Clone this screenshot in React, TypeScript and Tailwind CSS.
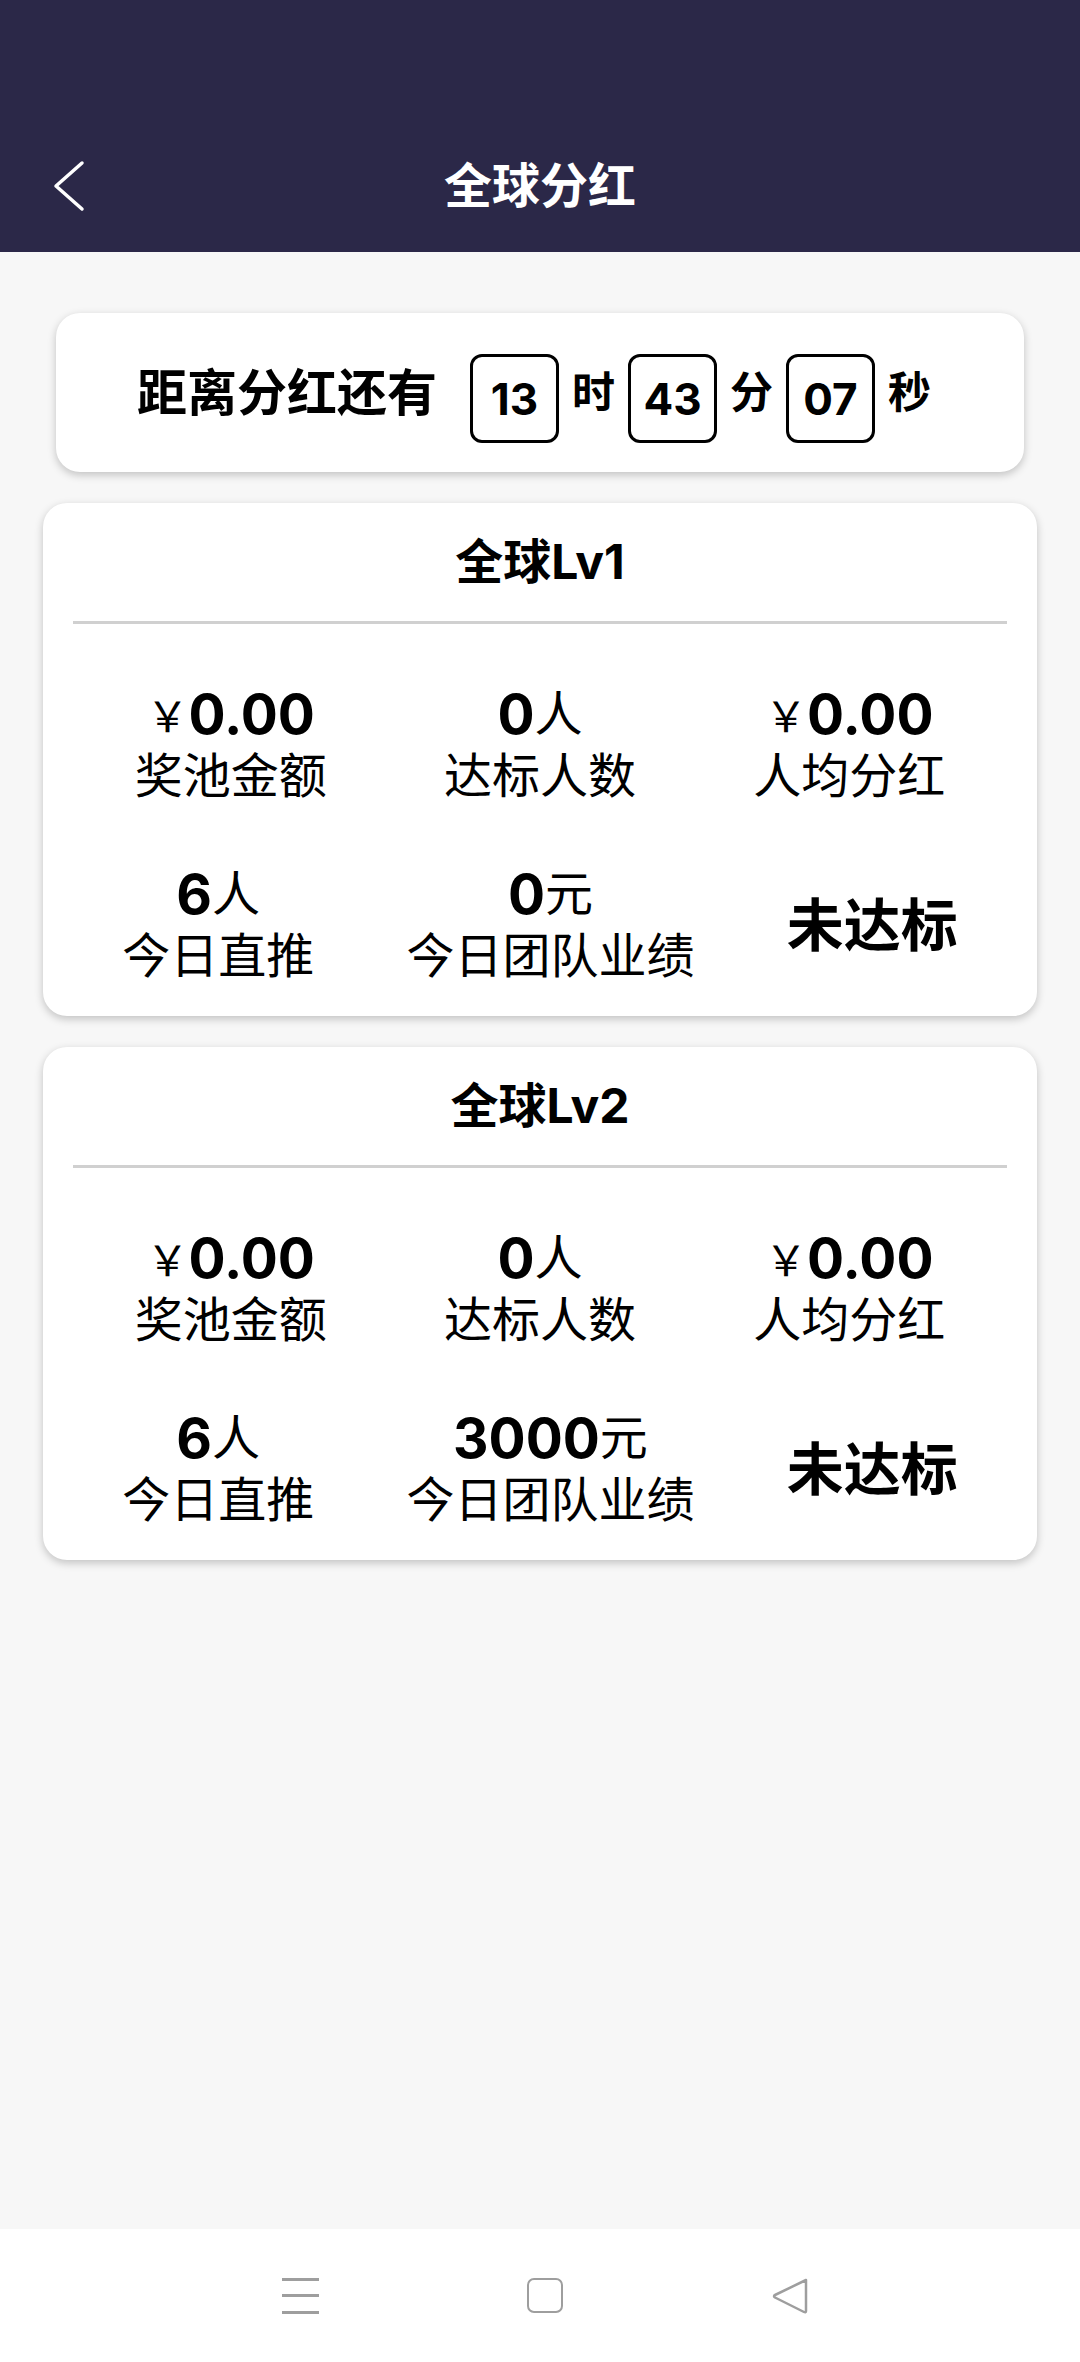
import React from "react";

type Stat = { prefix?: string; value: string; unit?: string; label: string };

interface TierCardProps {
  title: string;
  topStats: Stat[];
  bottomStats: Stat[];
  status: string;
}

function StatItem({ prefix, value, unit, label }: Stat) {
  return (
    <div className="flex flex-col items-center">
      <div className="flex h-[62px] items-center leading-none">
        {prefix && (
          <span className="text-[42px] font-normal [font-family:'Noto_Sans_CJK_SC',sans-serif]">{prefix}</span>
        )}
        <span className="text-[55px] font-bold">{value}</span>
        {unit && <span className="text-[48px] font-normal">{unit}</span>}
      </div>
      <div className="flex h-[62px] items-center text-[48px] leading-none">{label}</div>
    </div>
  );
}

function TierCard({ title, topStats, bottomStats, status }: TierCardProps) {
  return (
    <div className="mx-[43px] mt-[31px] rounded-[24px] bg-white pt-[34px] pb-[29px] shadow-[0_3px_8px_rgba(0,0,0,0.22)]">
      <div className="flex h-[50px] items-center justify-center text-[48px] font-bold leading-none">{title}</div>
      <div className="mx-[30px] mt-[34px] h-[3px] bg-[#d0d0d0]" />
      <div className="mt-[59px] flex justify-around px-[33px]">
        {topStats.map((s) => (
          <StatItem key={s.label} {...s} />
        ))}
      </div>
      <div className="mt-[56px] flex items-center justify-around px-[33px]">
        {bottomStats.map((s) => (
          <StatItem key={s.label} {...s} />
        ))}
        <div className="text-[57px] font-bold leading-none">{status}</div>
      </div>
    </div>
  );
}

function TimeBox({ value }: { value: string }) {
  return (
    <div className="mt-[12px] flex h-[89px] w-[89px] items-center justify-center rounded-[12px] border-[3px] border-black text-[44px] font-bold leading-none">
      {value}
    </div>
  );
}

export default function App() {
  const tiers = [
    { title: "全球Lv1", team: "0" },
    { title: "全球Lv2", team: "3000" },
  ];

  return (
    <div className="flex min-h-[2362px] flex-col bg-[#f7f7f7] text-black [font-family:Inter,'Noto_Sans_CJK_SC',sans-serif]">
      <header className="flex h-[252px] flex-col justify-end bg-[#2b2848]">
        <div className="relative flex h-[132px] items-center justify-center">
          <button type="button" className="absolute left-[52px] top-[40px]">
            <svg width="34" height="52" viewBox="0 0 34 52" fill="none">
              <polyline points="30,3 4,26 30,49" stroke="white" strokeWidth="3.5" strokeLinecap="round" strokeLinejoin="round" />
            </svg>
          </button>
          <h1 className="text-[48px] font-bold leading-none text-white">全球分红</h1>
        </div>
      </header>

      <main className="flex-1 pt-[61px]">
        <div className="mx-[56px] flex h-[159px] items-center justify-center rounded-[24px] bg-white pr-[12px] shadow-[0_3px_8px_rgba(0,0,0,0.22)]">
          <span className="mr-[33px] text-[50px] font-bold leading-none">距离分红还有</span>
          <TimeBox value="13" />
          <span className="mx-[13px] text-[43px] font-bold leading-none">时</span>
          <TimeBox value="43" />
          <span className="mx-[13px] text-[43px] font-bold leading-none">分</span>
          <TimeBox value="07" />
          <span className="ml-[13px] text-[43px] font-bold leading-none">秒</span>
        </div>

        {tiers.map((t) => (
          <TierCard
            key={t.title}
            title={t.title}
            topStats={[
              { prefix: "￥", value: "0.00", label: "奖池金额" },
              { value: "0", unit: "人", label: "达标人数" },
              { prefix: "￥", value: "0.00", label: "人均分红" },
            ]}
            bottomStats={[
              { value: "6", unit: "人", label: "今日直推" },
              { value: t.team, unit: "元", label: "今日团队业绩" },
            ]}
            status="未达标"
          />
        ))}
      </main>

      <nav className="flex h-[133px] items-center justify-center gap-[208px] bg-white pl-[9px]">
        <div className="flex h-[36px] w-[37px] flex-col justify-between">
          <div className="h-[3px] bg-[#9e9e9e]" />
          <div className="h-[3px] bg-[#9e9e9e]" />
          <div className="h-[3px] bg-[#9e9e9e]" />
        </div>
        <div className="h-[35px] w-[36px] rounded-[7px] border-[2.5px] border-[#9e9e9e]" />
        <svg width="37" height="36" viewBox="0 0 37 36" fill="none">
          <path d="M35 2 L4 17 Q2 18 4 19.5 L33 34 Q35 35 35 33 Z" stroke="#9e9e9e" strokeWidth="2.5" strokeLinejoin="round" />
        </svg>
      </nav>
    </div>
  );
}
